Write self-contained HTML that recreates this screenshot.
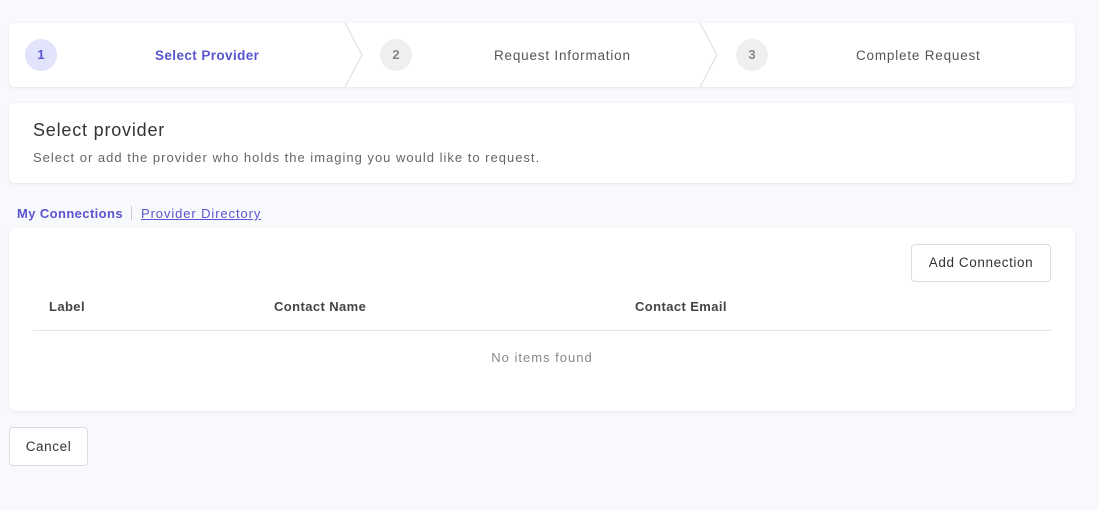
<!DOCTYPE html>
<html><head><style>
*{margin:0;padding:0;box-sizing:border-box}
body{width:1099px;height:510px;background:#f8f9fc;font-family:"Liberation Sans",sans-serif;position:relative;overflow:hidden;color:#333;letter-spacing:.8px}
b,.b{letter-spacing:.4px;font-weight:bold}
.card{position:absolute;background:#fff;border-radius:6px;box-shadow:0 1px 3px rgba(0,0,0,.08)}
.abs{position:absolute;white-space:nowrap}
.circ{position:absolute;width:32px;height:32px;border-radius:50%;text-align:center;line-height:32px;font-size:13px;font-weight:bold;letter-spacing:0}
.btn{position:absolute;background:#fff;border:1px solid #dcdde3;border-radius:4px;font-size:13.5px;color:#333;text-align:center;letter-spacing:.6px}
</style></head><body>
<div class="card" style="left:9px;top:23px;width:1066px;height:64px"></div>
<svg class="abs" style="left:0;top:23px" width="1099" height="64">
<polyline points="345,0 362,32 345,64" fill="none" stroke="#dcdde3" stroke-width="1"/>
<polyline points="700,0 717,32 700,64" fill="none" stroke="#dcdde3" stroke-width="1"/>
</svg>
<div class="circ" style="left:25px;top:39px;background:#e1e4fb;color:#5a55cf">1</div>
<div class="abs b" style="left:155px;top:48px;font-size:13.5px;color:#5a55cf">Select Provider</div>
<div class="circ" style="left:380px;top:39px;background:#efefef;color:#888">2</div>
<div class="abs" style="left:494px;top:48px;font-size:13.5px;color:#555">Request Information</div>
<div class="circ" style="left:736px;top:39px;background:#efefef;color:#888">3</div>
<div class="abs" style="left:856px;top:48px;font-size:13.5px;color:#555">Complete Request</div>

<div class="card" style="left:9px;top:103px;width:1066px;height:80px"></div>
<div class="abs" style="left:33px;top:120px;font-size:18px;color:#333;letter-spacing:.8px">Select provider</div>
<div class="abs" style="left:33px;top:150px;font-size:13px;color:#666;letter-spacing:1px">Select or add the provider who holds the imaging you would like to request.</div>

<div class="abs b" style="left:17px;top:206px;font-size:13px;color:#5a55cf">My Connections</div>
<div class="abs" style="left:131px;top:206px;width:1px;height:14px;background:#ccc"></div>
<div class="abs" style="left:141px;top:206px;font-size:13px;color:#5a55cf;text-decoration:underline;letter-spacing:.9px">Provider Directory</div>

<div class="card" style="left:9px;top:228px;width:1066px;height:183px"></div>
<div class="btn" style="left:911px;top:244px;width:140px;height:38px;line-height:36px">Add Connection</div>
<div class="abs b" style="left:49px;top:299px;font-size:13px;color:#444">Label</div>
<div class="abs b" style="left:274px;top:299px;font-size:13px;color:#444">Contact Name</div>
<div class="abs b" style="left:635px;top:299px;font-size:13px;color:#444">Contact Email</div>
<div class="abs" style="left:33px;top:330px;width:1018px;height:1px;background:#e2e3e8"></div>
<div class="abs" style="left:0;width:1084px;text-align:center;top:350px;font-size:13px;color:#888;letter-spacing:1px">No items found</div>

<div class="btn" style="left:9px;top:427px;width:79px;height:39px;line-height:37px">Cancel</div>
</body></html>
